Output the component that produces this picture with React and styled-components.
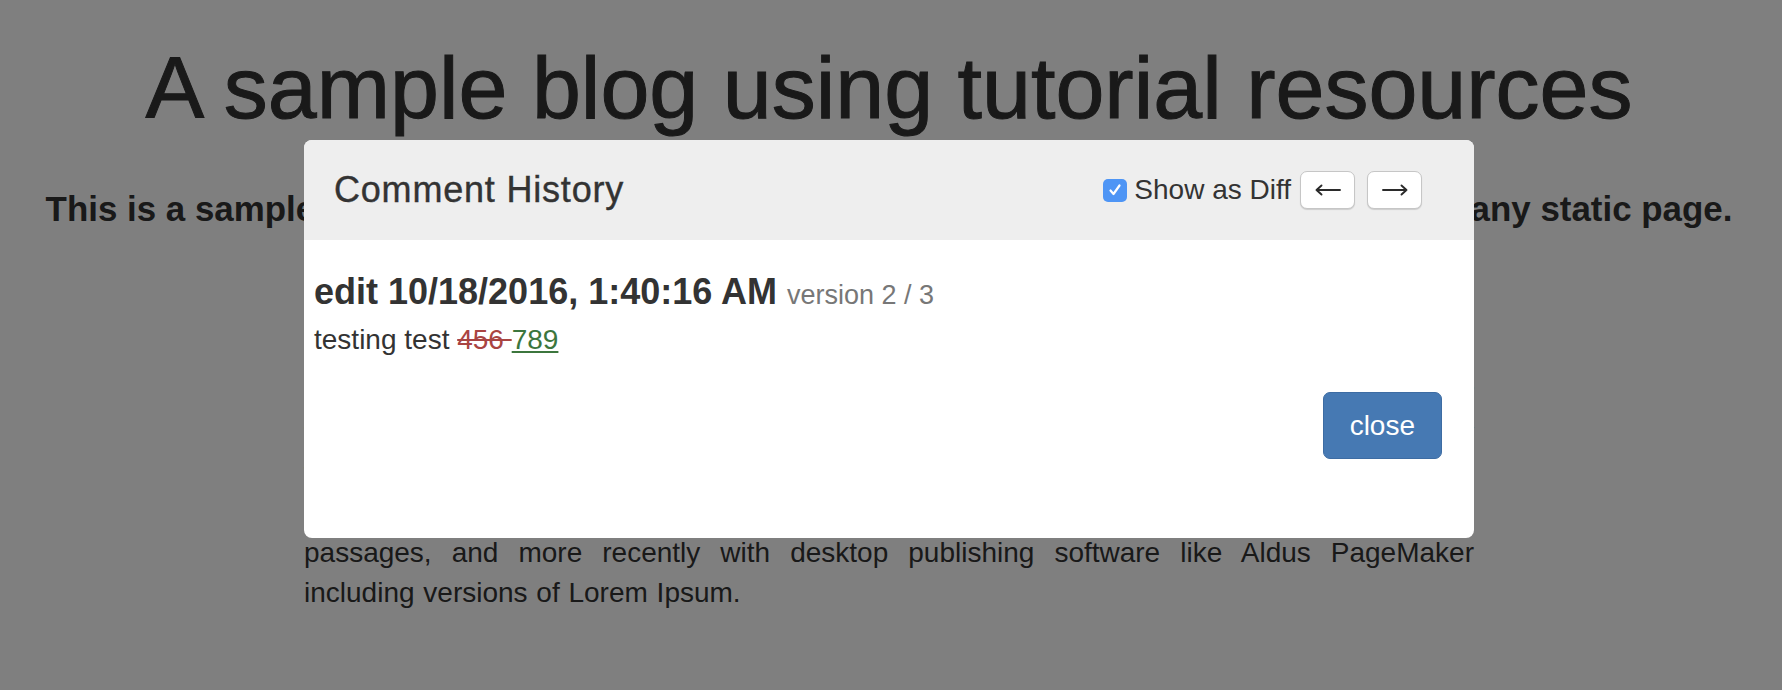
import React from "react";
import styled, { createGlobalStyle } from "styled-components";

const GlobalStyle = createGlobalStyle`
  html, body { margin: 0; padding: 0; background: #ffffff; }
  body {
    font-family: "Liberation Sans", Arial, Helvetica, sans-serif;
    color: #333333;
    font-size: 28px;
    line-height: 40px;
  }
  * { box-sizing: border-box; }
`;

const Page = styled.div`
  padding-right: 4px;
`;

const Masthead = styled.header`
  text-align: center;
`;

const BlogTitle = styled.h1`
  margin: 40px 0 0;
  font-size: 88px;
  line-height: 1.1;
  font-weight: 400;
  white-space: nowrap;
  -webkit-text-stroke: 1px #333333;
`;

const Tagline = styled.p`
  margin: 52px 0 0;
  font-size: 34.9px;
  line-height: 40px;
  font-weight: 700;
  white-space: nowrap;
`;

const Container = styled.main`
  width: 1170px;
  margin: 0 auto;
`;

const Article = styled.p`
  margin: ${(p) => p.$top}px 0 0;
  text-align: justify;
  word-spacing: 1px;
`;

const Backdrop = styled.div`
  position: fixed;
  inset: 0;
  background: rgba(0, 0, 0, 0.5);
  display: flex;
  justify-content: center;
  align-items: flex-start;
  padding: 140px 4px 0 0;
  z-index: 10;
`;

const Modal = styled.section`
  width: 1170px;
  background: #ffffff;
  border-radius: 8px;
  overflow: hidden;
`;

const ModalHeader = styled.div`
  display: flex;
  align-items: center;
  justify-content: space-between;
  height: 100px;
  padding: 0 52px 0 30px;
  background: #eeeeee;
`;

const ModalTitle = styled.h4`
  margin: 0;
  font-size: 36px;
  line-height: 1.1;
  font-weight: 400;
  letter-spacing: 0.8px;
  color: #333333;
  -webkit-text-stroke: 0.4px #333333;
`;

const Controls = styled.div`
  display: flex;
  align-items: center;
`;

const DiffToggle = styled.label`
  display: flex;
  align-items: center;
  gap: 7px;
  margin-right: 9px;
  font-size: 28px;
  line-height: 40px;
  color: #333333;
`;

const CheckBox = styled.span`
  width: 24px;
  height: 23px;
  border-radius: 5px;
  background: #4e95f5;
  display: flex;
  align-items: center;
  justify-content: center;
`;

const NavButtons = styled.div`
  display: flex;
  gap: 12px;
`;

const NavButton = styled.button`
  width: 55px;
  height: 38px;
  padding: 0;
  border: 1px solid #c6c6c6;
  border-radius: 7px;
  background: #ffffff;
  box-shadow: 0 1px 1px rgba(0, 0, 0, 0.14);
  display: flex;
  align-items: center;
  justify-content: center;
  color: #333333;
`;

const ModalBody = styled.div`
  padding: 12px 10px 0;
`;

const EditHeading = styled.h4`
  margin: 20px 0 8px;
  font-size: 36px;
  line-height: 1.1;
  font-weight: 700;
  color: #333333;
`;

const VersionNote = styled.small`
  font-size: 27px;
  font-weight: 400;
  color: #777777;
`;

const CommentText = styled.p`
  margin: 0;
  font-size: 28px;
  line-height: 40px;
  color: #333333;
`;

const Removed = styled.del`
  color: #a94442;
  text-decoration: line-through;
`;

const Added = styled.ins`
  color: #3c763d;
  text-decoration: underline;
`;

const ModalFooter = styled.div`
  display: flex;
  justify-content: flex-end;
  padding: 32px 32px 79px;
`;

const CloseButton = styled.button`
  padding: 13px 26px 12px;
  font-family: inherit;
  font-size: 28px;
  line-height: 40px;
  color: #ffffff;
  background: #4679b3;
  border: 1px solid #3d6ca3;
  border-radius: 7px;
`;

const Arrow = ({ dir }) => (
  <svg width="26" height="12" viewBox="0 0 26 12" aria-hidden="true">
    {dir === "left" ? (
      <path d="M1.5 6 H25 M6.5 1.5 L1.5 6 L6.5 10.5" fill="none" stroke="#2b2b2b" strokeWidth="1.9" strokeLinecap="round" strokeLinejoin="round" />
    ) : (
      <path d="M1 6 H24.5 M19.5 1.5 L24.5 6 L19.5 10.5" fill="none" stroke="#2b2b2b" strokeWidth="1.9" strokeLinecap="round" strokeLinejoin="round" />
    )}
  </svg>
);

export default function App() {
  return (
    <>
      <GlobalStyle />
      <Page>
        <Masthead>
          <BlogTitle>A sample blog using tutorial resources</BlogTitle>
          <Tagline>
            This is a sample blog to show how the comment system can be easily embedded into any static page.
          </Tagline>
        </Masthead>
        <Container>
          <Article $top={104}>
            Lorem Ipsum is simply dummy text of the printing and typesetting industry. Lorem Ipsum has been the
            industry's standard dummy text ever since the 1500s, when an unknown printer took a galley of type and
            scrambled it to make a type specimen book. It has survived not only five centuries, but also the leap
            into electronic typesetting, remaining essentially unchanged. It was popularised in the 1960s with the
            release of Letraset sheets containing Lorem Ipsum
            <br />
            passages, and more recently with desktop publishing software like Aldus PageMaker including versions of
            Lorem Ipsum.
          </Article>
        </Container>
      </Page>
      <Backdrop>
        <Modal role="dialog" aria-label="Comment History">
          <ModalHeader>
            <ModalTitle>Comment History</ModalTitle>
            <Controls>
              <DiffToggle>
                <CheckBox>
                  <svg width="14" height="14" viewBox="0 0 14 14" aria-hidden="true">
                    <path d="M2.5 7.5 L5.5 11 L11.5 2.5" fill="none" stroke="#fff" strokeWidth="2.2" strokeLinecap="round" strokeLinejoin="round" />
                  </svg>
                </CheckBox>
                Show as Diff
              </DiffToggle>
              <NavButtons>
                <NavButton aria-label="previous version">
                  <Arrow dir="left" />
                </NavButton>
                <NavButton aria-label="next version">
                  <Arrow dir="right" />
                </NavButton>
              </NavButtons>
            </Controls>
          </ModalHeader>
          <ModalBody>
            <EditHeading>
              edit 10/18/2016, 1:40:16 AM <VersionNote>version 2 / 3</VersionNote>
            </EditHeading>
            <CommentText>
              testing test <Removed>456 </Removed>
              <Added>789</Added>
            </CommentText>
          </ModalBody>
          <ModalFooter>
            <CloseButton>close</CloseButton>
          </ModalFooter>
        </Modal>
      </Backdrop>
    </>
  );
}
